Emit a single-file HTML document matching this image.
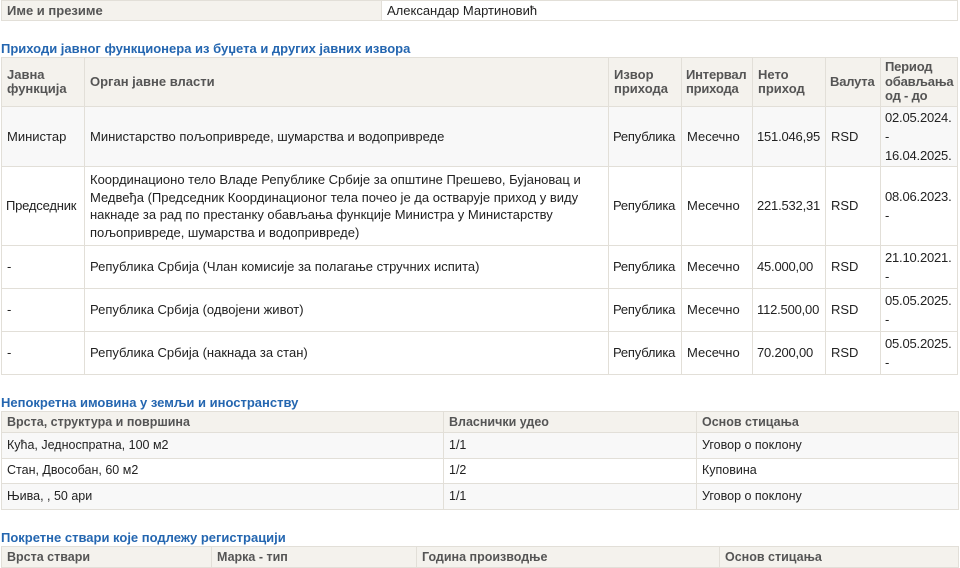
<!DOCTYPE html>
<html><head><meta charset="utf-8">
<style>
body{margin:0;width:960px;height:560px;overflow:hidden;background:#fff;font-family:"Liberation Sans",Arial,sans-serif;font-size:13px;color:#222;position:relative}
table{position:absolute;left:1px;border-collapse:collapse;table-layout:fixed;}
td,th{border:1px solid #e2dfd8;padding:0 5px;vertical-align:middle;text-align:left;line-height:17.5px;overflow:hidden;white-space:nowrap}
th{background:#f4f2ed;color:#555;font-weight:bold;line-height:14.5px}
.g td{background:#f8f8f8}
h2{position:absolute;left:1px;margin:0;font-size:13px;color:#2466b0;font-weight:bold}
.t2 td,.t2 th,.t3 th{font-size:12.5px}
.n{padding:0 4px;letter-spacing:-0.2px}
</style></head><body>
<table style="top:0;width:957px">
<tr style="height:20px"><th style="width:369px;font-size:13px;line-height:14px">Име и презиме</th><td style="line-height:14px">Александар Мартиновић</td></tr>
</table>
<h2 style="top:41px">Приходи јавног функционера из буџета и других јавних извора</h2>
<table style="top:57px;width:957px">
<colgroup><col style="width:83px"><col style="width:524px"><col style="width:73px"><col style="width:71px"><col style="width:73px"><col style="width:55px"><col style="width:77px"></colgroup>
<tr style="height:49px"><th>Јавна<br>функција</th><th>Орган јавне власти</th><th>Извор<br>прихода</th><th class="n">Интервал<br>прихода</th><th>Нето<br>приход</th><th class="n">Валута</th><th class="n">Период<br>обављања<br>од - до</th></tr>
<tr class="g" style="height:60px"><td>Министар</td><td>Министарство пољопривреде, шумарства и водопривреде</td><td class="n">Република</td><td>Месечно</td><td class="n">151.046,95</td><td>RSD</td><td class="n" style="line-height:19px">02.05.2024.<br>-<br>16.04.2025.</td></tr>
<tr style="height:79px"><td class="n">Председник</td><td>Координационо тело Владе Републике Србије за општине Прешево, Бујановац и<br>Медвеђа (Председник Координационог тела почео је да остварује приход у виду<br>накнаде за рад по престанку обављања функције Министра у Министарству<br>пољопривреде, шумарства и водопривреде)</td><td class="n">Република</td><td>Месечно</td><td class="n">221.532,31</td><td>RSD</td><td class="n" style="line-height:19px">08.06.2023.<br>-</td></tr>
<tr style="height:43px"><td>-</td><td>Република Србија (Члан комисије за полагање стручних испита)</td><td class="n">Република</td><td>Месечно</td><td class="n">45.000,00</td><td>RSD</td><td class="n" style="line-height:19px">21.10.2021.<br>-</td></tr>
<tr style="height:43px"><td>-</td><td>Република Србија (одвојени живот)</td><td class="n">Република</td><td>Месечно</td><td class="n">112.500,00</td><td>RSD</td><td class="n" style="line-height:19px">05.05.2025.<br>-</td></tr>
<tr style="height:43px"><td>-</td><td>Република Србија (накнада за стан)</td><td class="n">Република</td><td>Месечно</td><td class="n">70.200,00</td><td>RSD</td><td class="n" style="line-height:19px">05.05.2025.<br>-</td></tr>
</table>
<h2 style="top:395px">Непокретна имовина у земљи и иностранству</h2>
<table class="t2" style="top:411px;width:957px">
<colgroup><col style="width:442px"><col style="width:253px"><col style="width:262px"></colgroup>
<tr style="height:21px"><th>Врста, структура и површина</th><th>Власнички удео</th><th>Основ стицања</th></tr>
<tr class="g" style="height:26px"><td>Кућа, Једноспратна, 100 м2</td><td>1/1</td><td>Уговор о поклону</td></tr>
<tr style="height:25px"><td>Стан, Двособан, 60 м2</td><td>1/2</td><td>Куповина</td></tr>
<tr class="g" style="height:26px"><td>Њива, , 50 ари</td><td>1/1</td><td>Уговор о поклону</td></tr>
</table>
<h2 style="top:530px">Покретне ствари које подлежу регистрацији</h2>
<table class="t3" style="top:546px;width:957px">
<colgroup><col style="width:210px"><col style="width:205px"><col style="width:303px"><col style="width:239px"></colgroup>
<tr style="height:21px"><th>Врста ствари</th><th>Марка - тип</th><th>Година производње</th><th>Основ стицања</th></tr>
</table>
</body></html>
